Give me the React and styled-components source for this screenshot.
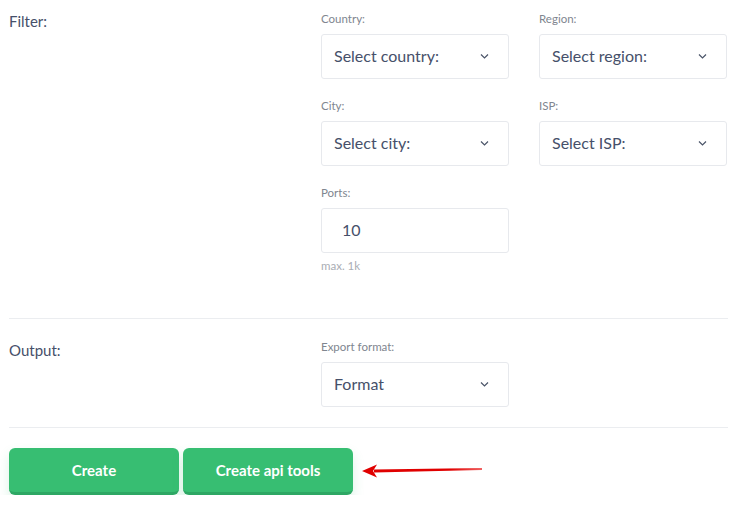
import React from "react";
import styled, { createGlobalStyle } from "styled-components";

const GlobalStyle = createGlobalStyle`
  body {
    margin: 0;
    background: #ffffff;
    font-family: Lato, "Open Sans", sans-serif;
    color: #3b4660;
  }
`;

const Page = styled.div`
  width: 741px;
  padding: 0 13px 0 9px;
  box-sizing: border-box;
`;

const Section = styled.section`
  display: grid;
  grid-template-columns: 312px 1fr;
  padding: ${(props) => props.pad};
  border-bottom: 1px solid #ebedf0;
`;

const SectionTitle = styled.div`
  font-size: 15px;
  line-height: 18px;
  color: #46506a;
  padding-top: ${(props) => props.top || 0}px;
`;

const Fields = styled.div`
  display: grid;
  grid-template-columns: 188px 188px;
  column-gap: 30px;
  row-gap: 20px;
  align-items: start;
`;

const Field = styled.div`
  display: flex;
  flex-direction: column;
`;

const Label = styled.label`
  font-size: 11.5px;
  line-height: 14px;
  color: #80868f;
  margin-bottom: 8px;
`;

const Box = styled.div`
  height: 45px;
  box-sizing: border-box;
  border: 1px solid #e7e9ed;
  border-radius: 3px;
  display: flex;
  align-items: center;
  justify-content: space-between;
  padding: 0 19px 2px ${(props) => props.padLeft || 12}px;
  font-size: 16px;
  color: #46506a;
`;

const Hint = styled.div`
  font-size: 11.5px;
  line-height: 14px;
  color: #a9adb4;
  margin-top: 6px;
`;

const Actions = styled.div`
  display: flex;
  align-items: center;
  gap: 4px;
  padding-top: 20px;
`;

const Button = styled.button`
  width: 170px;
  height: 47px;
  border: none;
  border-bottom: 3px solid #2ea764;
  border-radius: 6px;
  background: #37be72;
  color: #ffffff;
  font-family: Lato, "Open Sans", sans-serif;
  font-size: 15px;
  font-weight: 700;
  box-shadow: 0 6px 12px rgba(55, 190, 114, 0.18);
  cursor: pointer;
`;

const Arrow = styled.svg`
  margin-left: 3px;
  margin-top: -2px;
`;

const Chevron = () => (
  <svg width="9" height="6" viewBox="0 0 9 6" fill="none">
    <path d="M1 1.5l3.5 3.5 3.5-3.5" stroke="#4a5468" strokeWidth="1.2" />
  </svg>
);

const Select = ({ label, value }) => (
  <Field>
    <Label>{label}</Label>
    <Box>
      <span>{value}</span>
      <Chevron />
    </Box>
  </Field>
);

export default function App() {
  return (
    <Page>
      <GlobalStyle />
      <Section pad="12px 0 45px">
        <SectionTitle top={0}>Filter:</SectionTitle>
        <Fields>
          <Select label="Country:" value="Select country:" />
          <Select label="Region:" value="Select region:" />
          <Select label="City:" value="Select city:" />
          <Select label="ISP:" value="Select ISP:" />
          <Field>
            <Label>Ports:</Label>
            <Box padLeft={20}>10</Box>
            <Hint>max. 1k</Hint>
          </Field>
        </Fields>
      </Section>
      <Section pad="21px 0 20px">
        <SectionTitle top={1}>Output:</SectionTitle>
        <Fields>
          <Select label="Export format:" value="Format" />
        </Fields>
      </Section>
      <Actions>
        <Button>Create</Button>
        <Button>Create api tools</Button>
        <Arrow width="126" height="16" viewBox="0 0 126 16">
          <defs>
            <linearGradient id="shaft" x1="0" x2="1" y1="0" y2="0">
              <stop offset="0" stopColor="#e00000" />
              <stop offset="0.7" stopColor="#e00000" />
              <stop offset="1" stopColor="#f06060" />
            </linearGradient>
          </defs>
          <path d="M14 6.5 L122 5 L122 7 L14 9.5 Z" fill="url(#shaft)" />
          <path d="M2 8 L17 1.5 L13 8 L17 14.5 Z" fill="#e00000" />
        </Arrow>
      </Actions>
    </Page>
  );
}
